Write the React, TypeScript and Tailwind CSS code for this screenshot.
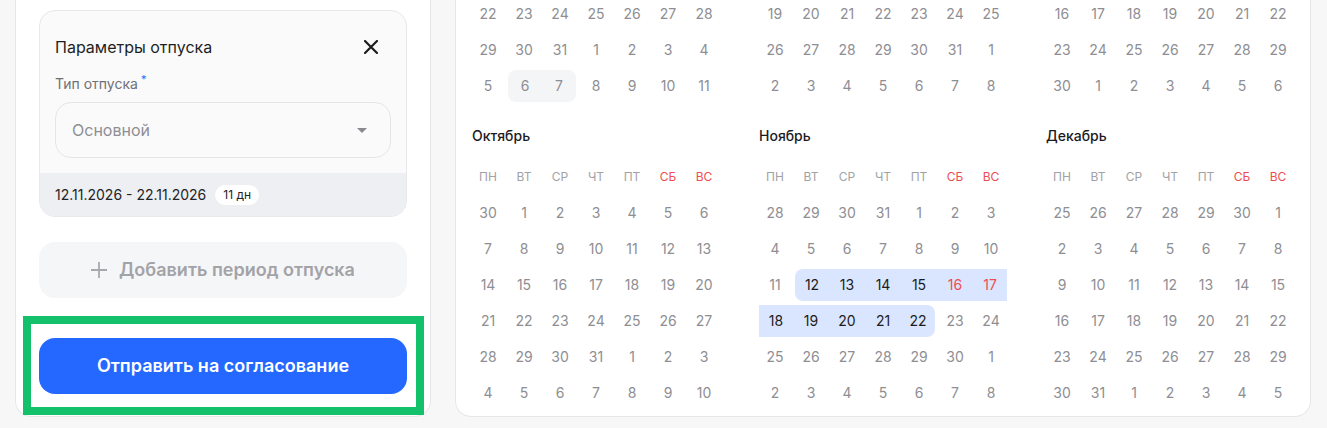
type Month = {
  name: string;
  weeks: number[][];
  range?: number[]; // [start, end] of the selected range inside the month's own days
};

// six rows per month; first & last row may hold neighbouring months
const months: Month[] = [
  {
    name: "Июль",
    weeks: [
      [1, 2, 3, 4, 5, 6, 7],
      [8, 9, 10, 11, 12, 13, 14],
      [15, 16, 17, 18, 19, 20, 21],
      [22, 23, 24, 25, 26, 27, 28],
      [29, 30, 31, 1, 2, 3, 4],
      [5, 6, 7, 8, 9, 10, 11],
    ],
  },
  {
    name: "Август",
    weeks: [
      [29, 30, 31, 1, 2, 3, 4],
      [5, 6, 7, 8, 9, 10, 11],
      [12, 13, 14, 15, 16, 17, 18],
      [19, 20, 21, 22, 23, 24, 25],
      [26, 27, 28, 29, 30, 31, 1],
      [2, 3, 4, 5, 6, 7, 8],
    ],
  },
  {
    name: "Сентябрь",
    weeks: [
      [26, 27, 28, 29, 30, 31, 1],
      [2, 3, 4, 5, 6, 7, 8],
      [9, 10, 11, 12, 13, 14, 15],
      [16, 17, 18, 19, 20, 21, 22],
      [23, 24, 25, 26, 27, 28, 29],
      [30, 1, 2, 3, 4, 5, 6],
    ],
  },
  {
    name: "Октябрь",
    weeks: [
      [30, 1, 2, 3, 4, 5, 6],
      [7, 8, 9, 10, 11, 12, 13],
      [14, 15, 16, 17, 18, 19, 20],
      [21, 22, 23, 24, 25, 26, 27],
      [28, 29, 30, 31, 1, 2, 3],
      [4, 5, 6, 7, 8, 9, 10],
    ],
  },
  {
    name: "Ноябрь",
    weeks: [
      [28, 29, 30, 31, 1, 2, 3],
      [4, 5, 6, 7, 8, 9, 10],
      [11, 12, 13, 14, 15, 16, 17],
      [18, 19, 20, 21, 22, 23, 24],
      [25, 26, 27, 28, 29, 30, 1],
      [2, 3, 4, 5, 6, 7, 8],
    ],
    range: [12, 22],
  },
  {
    name: "Декабрь",
    weeks: [
      [25, 26, 27, 28, 29, 30, 1],
      [2, 3, 4, 5, 6, 7, 8],
      [9, 10, 11, 12, 13, 14, 15],
      [16, 17, 18, 19, 20, 21, 22],
      [23, 24, 25, 26, 27, 28, 29],
      [30, 31, 1, 2, 3, 4, 5],
    ],
  },
];

const weekdays = ["пн", "вт", "ср", "чт", "пт", "сб", "вс"];

// July's last row: "6 7" carry a gray background
const mutedCells: Record<string, [number, number]> = { "Июль-5": [1, 2] };

function isOwnDay(wi: number, day: number) {
  if (wi === 0) return day < 20;
  if (wi >= 4) return day > 20;
  return true;
}

function MonthGrid({ month }: { month: Month }) {
  return (
    <div>
      <div className="mb-[15px] h-5 pl-0.5 text-sm leading-5 font-medium text-[#1b1b1f]">
        {month.name}
      </div>
      <div className="grid grid-cols-[repeat(7,36px)] gap-y-1">
        {weekdays.map((d, i) => (
          <div
            key={d}
            className={`flex h-8 items-center justify-center text-xs uppercase ${
              i >= 5 ? "text-[#ee4b52]" : "text-[#a2a2a6]"
            }`}
          >
            {d}
          </div>
        ))}
        {month.weeks.map((week, wi) =>
          week.map((day, di) => {
            const own = isOwnDay(wi, day);
            const inRange =
              !!month.range && own && day >= month.range[0] && day <= month.range[1];
            const isStart = inRange && day === month.range![0];
            const isEnd = inRange && day === month.range![1];
            const muted = mutedCells[`${month.name}-${wi}`];
            const inMuted = !!muted && di >= muted[0] && di <= muted[1];

            let cls = "flex h-8 items-center justify-center text-sm ";
            if (inRange) {
              cls += "bg-[#dae6ff] ";
              cls += di >= 5 ? "text-[#ef4d52] " : "text-[#1c1c20] ";
              if (isStart) cls += "ml-[2px] rounded-l-lg ";
              else if (di === 0) cls += "ml-[2px] ";
              if (isEnd) cls += "mr-[2px] rounded-r-lg ";
              else if (di === 6) cls += "mr-[2px] ";
            } else if (inMuted) {
              cls += "bg-[#f4f5f7] text-[#8e8e93] ";
              if (di === muted[0]) cls += "ml-[2px] rounded-l-lg ";
              if (di === muted[1]) cls += "mr-[2px] rounded-r-lg ";
            } else {
              cls += "text-[#8e8e93] ";
            }
            return (
              <div key={`${wi}-${di}`} className={cls}>
                {day}
              </div>
            );
          })
        )}
      </div>
    </div>
  );
}

export default function App() {
  return (
    <div
      className="h-[428px] overflow-hidden bg-[#f7f7f8]"
      style={{ fontFamily: "Inter, 'Noto Sans', sans-serif" }}
    >
      <div className="flex items-start gap-6 pl-[15px]">
        {/* Left: vacation form */}
        <aside className="w-[416px] shrink-0 rounded-b-2xl border-x border-b border-[#e6e7ea] bg-white px-[23px] pt-[10px] pb-[22px]">
          <div className="overflow-hidden rounded-2xl border border-[#e7e8eb] bg-[#fafafb]">
            <div className="px-[15px] pt-6 pb-[15px]">
              <div className="flex h-6 items-center justify-between">
                <h3 className="text-base text-[#1f1f23]">Параметры отпуска</h3>
                <svg
                  width="14"
                  height="14"
                  viewBox="0 0 14 14"
                  className="mr-[13px] text-[#1c1c1f]"
                >
                  <path
                    d="M1 1l12 12M13 1L1 13"
                    stroke="currentColor"
                    strokeWidth="2.2"
                    strokeLinecap="round"
                  />
                </svg>
              </div>
              <div className="mt-4 mb-[9px] flex h-[18px] items-center text-sm text-[#707075]">
                Тип отпуска
                <span className="ml-[3px] -mt-2 text-[11px] text-[#2a6bff]">*</span>
              </div>
              <div className="flex h-14 items-center justify-between rounded-2xl border border-[#e4e5e8] bg-[#fafafb] pr-[23px] pl-4">
                <span className="text-base text-[#8e8e93]">Основной</span>
                <svg width="10" height="5" viewBox="0 0 10 5" className="text-[#8a8a8e]">
                  <path d="M0 0h10L5 5z" fill="currentColor" />
                </svg>
              </div>
            </div>
            <div className="flex h-[43px] items-center gap-[9px] bg-[#edeff2] px-[15px]">
              <span className="text-sm text-[#232327]">12.11.2026 - 22.11.2026</span>
              <span className="rounded-full bg-white px-2 text-xs leading-5 text-[#232327]">
                11 дн
              </span>
            </div>
          </div>

          <button className="mt-[25px] flex h-14 w-full items-center justify-center gap-3 rounded-2xl bg-[#f5f6f8] text-lg font-semibold text-[#a3a3a7]">
            <svg width="16" height="16" viewBox="0 0 16 16" className="text-[#a8a8ac]">
              <path d="M8 0v16M0 8h16" stroke="currentColor" strokeWidth="1.8" />
            </svg>
            Добавить период отпуска
          </button>

          <div className="relative mt-10">
            <button className="flex h-14 w-full items-center justify-center rounded-2xl bg-[#2468ff] text-lg font-semibold text-white">
              Отправить на согласование
            </button>
            {/* highlight frame */}
            <div className="pointer-events-none absolute -top-[22px] -right-[17px] -bottom-[21px] -left-4 border-8 border-[#13c16b]" />
          </div>
        </aside>

        {/* Right: calendar */}
        <section className="w-[856px] shrink-0 overflow-hidden rounded-b-2xl border-x border-b border-[#e6e7ea] bg-white px-[14px] pb-[7px]">
          <div className="-mt-[181px] grid grid-cols-3 gap-x-[35px] gap-y-6">
            {months.map((m) => (
              <MonthGrid key={m.name} month={m} />
            ))}
          </div>
        </section>
      </div>
    </div>
  );
}
